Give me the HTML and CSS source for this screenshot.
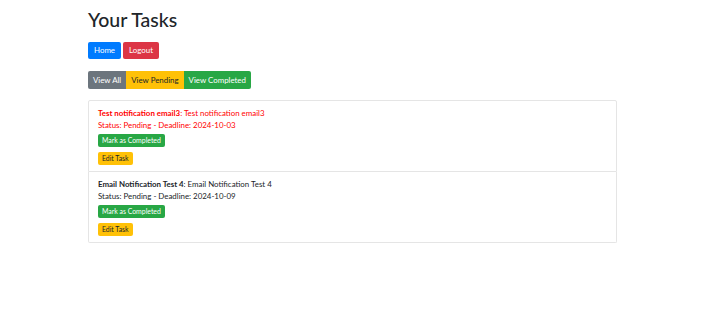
FILE: index.html
```html
<!DOCTYPE html>
<html>
<head>
<meta charset="utf-8">
<link rel="stylesheet" href="styles.css">
</head>
<body>
<div class="container">
  <h1 class="title">Your Tasks</h1>
  <div class="nav-row">
    <a class="btn btn-primary">Home</a>
    <a class="btn btn-danger">Logout</a>
  </div>
  <div class="btn-group">
    <a class="btn btn-secondary">View All</a>
    <a class="btn btn-warning">View Pending</a>
    <a class="btn btn-success">View Completed</a>
  </div>
  <ul class="list">
    <li class="item overdue">
      <div class="line"><strong>Test notification email3</strong>: Test notification email3</div>
      <div class="line">Status: Pending - Deadline: 2024-10-03</div>
      <div class="actions">
        <button class="btn-sm btn-success">Mark as Completed</button>
        <a class="btn-sm btn-warning">Edit Task</a>
      </div>
    </li>
    <li class="item">
      <div class="line"><strong>Email Notification Test 4</strong>: Email Notification Test 4</div>
      <div class="line">Status: Pending - Deadline: 2024-10-09</div>
      <div class="actions">
        <button class="btn-sm btn-success">Mark as Completed</button>
        <a class="btn-sm btn-warning">Edit Task</a>
      </div>
    </li>
  </ul>
</div>
</body>
</html>
```

FILE: styles.css
```css
* { box-sizing: border-box; }
body {
  margin: 0;
  font-family: Lato, "Open Sans", sans-serif;
  font-size: 7.9px;
  line-height: 12px;
  color: #212529;
  background: #fff;
}
.container {
  width: 529px;
  margin-left: 88px;
  padding-top: 7px;
}
.title {
  margin: 0;
  font-size: 19.5px;
  line-height: 26px;
  font-weight: 500;
}
.nav-row {
  display: flex;
  gap: 2px;
  margin-top: 9px;
}
.btn {
  display: inline-block;
  height: 17px;
  line-height: 17px;
  padding: 0 6px;
  border-radius: 2px;
  font-size: 7.9px;
  color: #fff;
  text-decoration: none;
}
.btn-primary { background: #007bff; }
.btn-danger { background: #dc3545; }
.btn-secondary { background: #6c757d; }
.btn-warning { background: #ffc107; color: #212529; }
.btn-success { background: #28a745; color: #fff; }
.btn-group {
  display: flex;
  margin-top: 12px;
}
.btn-group .btn {
  height: 18px;
  line-height: 18px;
  padding: 0 5px;
  border-radius: 0;
}
.btn-group .btn:first-child { border-radius: 2px 0 0 2px; }
.btn-group .btn:last-child { border-radius: 0 2px 2px 0; }
.list {
  list-style: none;
  margin: 11px 0 0;
  padding: 0;
}
.item {
  border: 1px solid #e5e5e5;
  padding: 6px 9px 6px 9px;
  height: 72px;
}
.item + .item {
  border-top: 0;
  height: 71px;
}
.item:first-child { border-radius: 2px 2px 0 0; }
.item:last-child { border-radius: 0 0 2px 2px; }
.overdue { color: #ff0000; }
.line { white-space: nowrap; }
.actions {
  display: flex;
  flex-direction: column;
  align-items: flex-start;
  gap: 5px;
  margin-top: 3px;
}
.btn-sm {
  display: inline-block;
  border: 0;
  height: 13px;
  line-height: 13px;
  padding: 0 4px;
  font-family: inherit;
  font-size: 6.9px;
  border-radius: 2px;
}
```
